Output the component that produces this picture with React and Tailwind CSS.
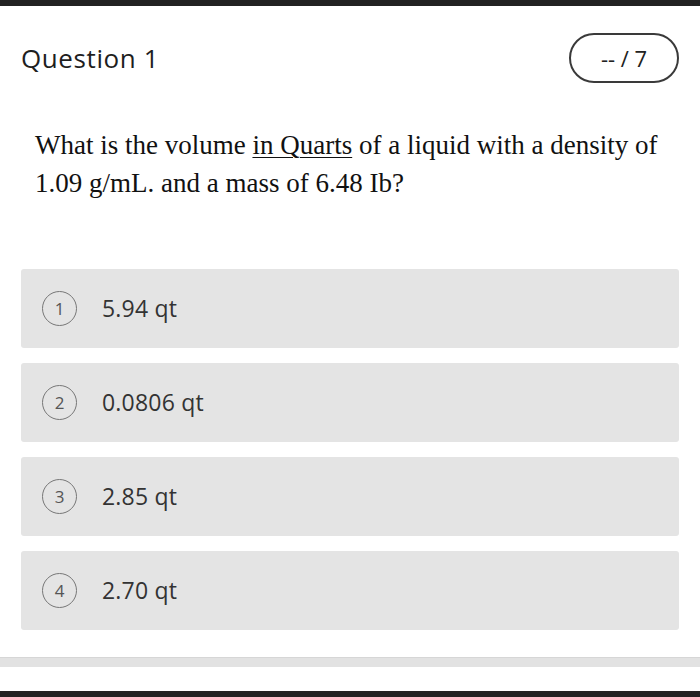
import React from 'react';

const options = ['5.94 qt', '0.0806 qt', '2.85 qt', '2.70 qt'];

export default function App() {
    return (
        <div className="w-[700px] h-[697px] bg-white flex flex-col overflow-hidden">
            {/* top bar */}
            <div className="h-[6px] bg-[#222222] shrink-0" />

            {/* header */}
            <div className="flex items-center justify-between pl-[21px] pr-[21px] pt-[24px] h-[80px] shrink-0">
                <h1 className="font-['Open_Sans',sans-serif] text-[26px] text-[#1e1e1e] tracking-[0.6px]">Question 1</h1>
                <div className="w-[110px] h-[50px] rounded-full border-2 border-[#3a3a3a] flex items-center justify-center font-['Open_Sans',sans-serif] font-medium text-[22px] text-[#222]">
                    -- / 7
                </div>
            </div>

            {/* question text */}
            <div className="pl-[35px] pr-[30px] pt-[40px] font-['Liberation_Serif',serif] text-[27px] leading-[38px] text-[#111]">
                What is the volume <span className="underline underline-offset-[3px] decoration-1">in Quarts</span> of a liquid with a density of 1.09 g/mL. and a mass of 6.48 Ib?
            </div>

            {/* options */}
            <div className="flex flex-col gap-[15px] px-[21px] pt-[67px]">
                {options.map((o, i) => (
                    <div key={i} className="h-[79px] bg-[#e4e4e4] rounded-[3px] flex items-center pl-[21px]">
                        <div className="w-[35px] h-[35px] rounded-full border-[1.5px] border-[#777] flex items-center justify-center font-['Open_Sans',sans-serif] text-[17px] text-[#555]">
                            {i + 1}
                        </div>
                        <span className="ml-[25px] font-['Open_Sans',sans-serif] text-[23px] tracking-[0.2px] text-[#333]">{o}</span>
                    </div>
                ))}
            </div>

            <div className="flex-1" />
            {/* bottom divider */}
            <div className="h-[10px] bg-[#e2e2e2] border-t border-[#d6d6d6] shrink-0 mb-[24px]" />
            <div className="h-[6px] bg-[#222222] shrink-0" />
        </div>
    );
}
